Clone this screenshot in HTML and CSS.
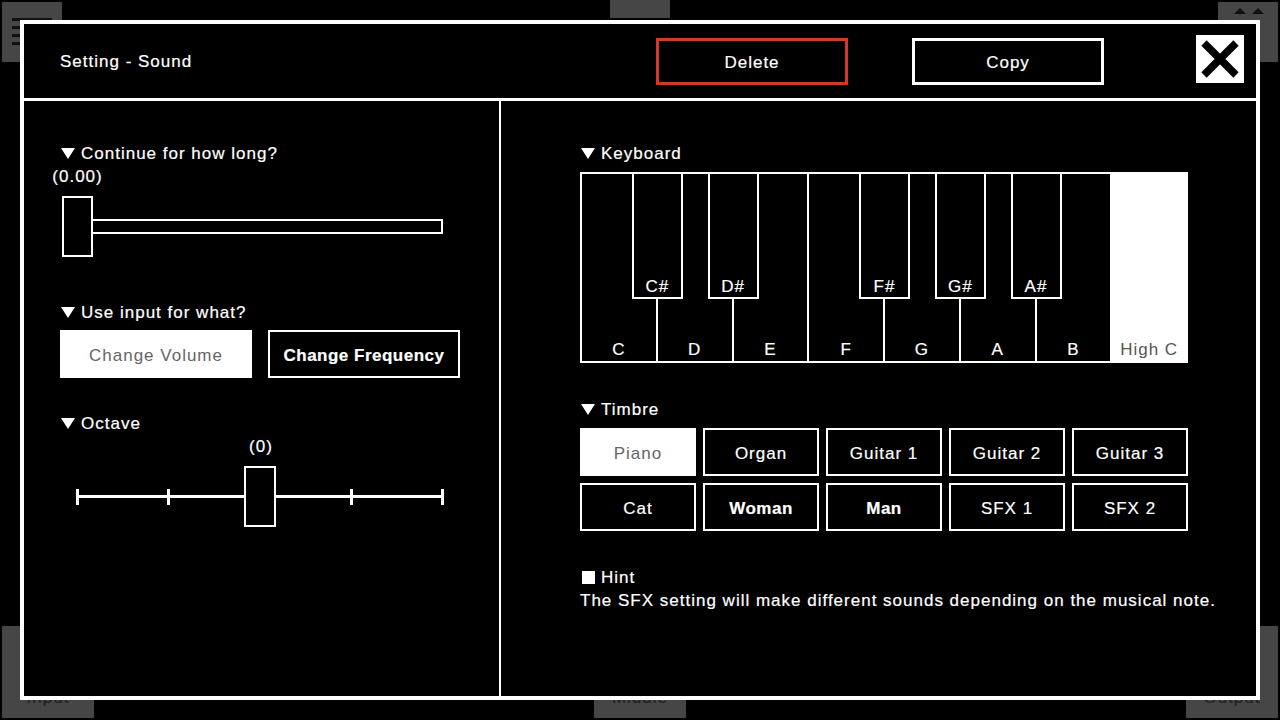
FILE: index.html
```html
<!DOCTYPE html>
<html lang="en">
<head>
    <meta charset="UTF-8">
    <title>Setting - Sound</title>
    <link rel="stylesheet" href="styles.css">
</head>
<body>

    <!-- Editor behind the dialog -->
    <div class="stage">
        <div class="stage-row">
            <div class="tile menu-tile">
                <span></span><span></span><span></span><span></span>
            </div>
            <div class="tile tab-tile"></div>
            <div class="tile arrow-tile">
                <svg width="60" height="60" viewBox="0 0 60 60">
                    <path d="M16 12 L22 6 L28 12 Z M34 12 L40 6 L46 12 Z M16 30 L22 36 L28 30 Z" fill="#111"/>
                </svg>
            </div>
        </div>
        <div class="stage-row bottom">
            <div class="tile node-tile">Input</div>
            <div class="tile node-tile">Middle</div>
            <div class="tile node-tile">Output</div>
        </div>
    </div>

    <!-- Sound settings dialog -->
    <div class="dialog">
        <div class="dialog-head">
            <div class="title">Setting - Sound</div>
            <button class="head-btn delete">Delete</button>
            <button class="head-btn copy">Copy</button>
            <button class="close-btn">
                <svg width="48" height="48" viewBox="0 0 48 48">
                    <path d="M8 8 L40 40 M40 8 L8 40" stroke="#000" stroke-width="7.5"/>
                </svg>
            </button>
        </div>

        <div class="dialog-body">
            <div class="panel left">
                <div class="label"><i class="tri"></i>Continue for how long?</div>
                <div class="length-value"><span>(0.00)</span></div>
                <div class="length-slider">
                    <div class="thumb"></div>
                    <div class="track"></div>
                </div>

                <div class="label gap"><i class="tri"></i>Use input for what?</div>
                <div class="choice-row">
                    <button class="choice selected">Change Volume</button>
                    <button class="choice bold">Change Frequency</button>
                </div>

                <div class="label gap2"><i class="tri"></i>Octave</div>
                <div class="octave">
                    <div class="octave-value">(0)</div>
                    <div class="octave-track">
                        <span class="tick"></span>
                        <span class="tick"></span>
                        <span class="tick"></span>
                        <span class="tick"></span>
                        <span class="tick"></span>
                        <div class="octave-thumb"></div>
                    </div>
                </div>
            </div>

            <div class="panel right">
                <div class="label"><i class="tri"></i>Keyboard</div>
                <div class="keyboard">
                    <div class="white-key">C<div class="black-key">C#</div></div>
                    <div class="white-key">D<div class="black-key">D#</div></div>
                    <div class="white-key">E</div>
                    <div class="white-key">F<div class="black-key">F#</div></div>
                    <div class="white-key">G<div class="black-key">G#</div></div>
                    <div class="white-key">A<div class="black-key">A#</div></div>
                    <div class="white-key">B</div>
                    <div class="white-key high">High C</div>
                </div>

                <div class="label gap3"><i class="tri"></i>Timbre</div>
                <div class="timbre-grid">
                    <button class="timbre selected">Piano</button>
                    <button class="timbre">Organ</button>
                    <button class="timbre">Guitar 1</button>
                    <button class="timbre">Guitar 2</button>
                    <button class="timbre">Guitar 3</button>
                    <button class="timbre">Cat</button>
                    <button class="timbre bold">Woman</button>
                    <button class="timbre bold">Man</button>
                    <button class="timbre">SFX 1</button>
                    <button class="timbre">SFX 2</button>
                </div>

                <div class="label gap3"><i class="square"></i>Hint</div>
                <div class="hint">The SFX setting will make different sounds depending on the musical note.</div>
            </div>
        </div>
    </div>

</body>
</html>
```

FILE: styles.css
```css
/* Reset */
* {
    margin: 0;
    padding: 0;
    box-sizing: border-box;
}

body {
    width: 1280px;
    height: 720px;
    overflow: hidden;
    background: #000;
    color: #fff;
    font-family: "Liberation Sans", Arial, sans-serif;
    font-size: 17px;
    letter-spacing: 1px;
    -webkit-text-stroke: 0.2px;
    position: relative;
}

button {
    font-family: inherit;
    font-size: 17px;
    letter-spacing: 1px;
    color: #fff;
    background: #000;
    cursor: pointer;
    padding-top: 3px;
}

/* Background editor */
.stage {
    height: 720px;
    display: flex;
    flex-direction: column;
    justify-content: space-between;
}

.stage-row {
    display: flex;
    justify-content: space-between;
    align-items: flex-start;
    padding: 2px 2px 0;
}

.stage-row.bottom {
    align-items: flex-end;
    padding: 0 2px 2px;
}

.tile {
    background: #464646;
}

.menu-tile {
    width: 60px;
    height: 60px;
    padding: 16px 10px;
    display: flex;
    flex-direction: column;
    gap: 5px;
}

.menu-tile span {
    height: 3px;
    background: #111;
}

.tab-tile {
    width: 60px;
    height: 18px;
    margin-top: -2px;
}

.arrow-tile {
    width: 60px;
    height: 60px;
}

.node-tile {
    width: 92px;
    height: 92px;
    color: #222;
    text-align: center;
    padding-top: 62px;
}

/* Dialog */
.dialog {
    position: absolute;
    left: 20px;
    top: 20px;
    width: 1240px;
    height: 680px;
    border: 4px solid #fff;
    background: #000;
    display: flex;
    flex-direction: column;
}

.dialog-head {
    height: 77px;
    border-bottom: 3px solid #fff;
    display: flex;
    align-items: center;
    padding: 0 12px 0 36px;
}

.title {
    flex: 1;
    padding-top: 2px;
}

.head-btn {
    width: 192px;
    height: 47px;
    border: 3px solid #fff;
}

.head-btn.delete {
    border-color: #d2392d;
    margin-right: 64px;
}

.head-btn.copy {
    margin-right: 92px;
}

.close-btn {
    width: 48px;
    height: 48px;
    border: none;
    padding: 0;
    background: #fff;
    display: flex;
    margin-top: -4px;
}

.dialog-body {
    flex: 1;
    display: flex;
}

.panel {
    padding-top: 42px;
}

.panel.left {
    width: 477px;
    border-right: 2px solid #fff;
    padding-left: 36px;
}

.panel.right {
    flex: 1;
    padding-left: 79px;
}

.label {
    line-height: 20px;
    height: 20px;
    padding-top: 2px;
    display: flex;
    align-items: center;
    gap: 6px;
}

.tri {
    width: 0;
    height: 0;
    margin: -2px 0 0 1px;
    border-left: 7.5px solid transparent;
    border-right: 7.5px solid transparent;
    border-top: 11px solid #fff;
}

.square {
    width: 13px;
    height: 13px;
    margin: -2px 0 0 2px;
    background: #fff;
}

.label.gap {
    margin-top: 45px;
}

.label.gap2 {
    margin-top: 35px;
}

.label.gap3 {
    margin-top: 36px;
}

/* Length slider */
.length-value {
    width: 31px;
    margin: 4px 0 0 2px;
    line-height: 20px;
    display: flex;
    justify-content: center;
    white-space: nowrap;
}

.length-slider {
    display: flex;
    align-items: center;
    margin: 9px 0 0 2px;
}

.thumb {
    width: 31px;
    height: 61px;
    border: 2px solid #fff;
}

.track {
    width: 350px;
    height: 15px;
    border: 2px solid #fff;
    border-left: none;
}

/* Input choice */
.choice-row {
    display: flex;
    gap: 16px;
    margin-top: 8px;
}

.choice {
    width: 192px;
    height: 48px;
    border: 2px solid #fff;
}

.choice.selected,
.timbre.selected {
    background: #fff;
    color: #666;
    -webkit-text-stroke: 0;
}

.bold {
    font-weight: bold;
    letter-spacing: 0.5px;
}

/* Octave slider */
.octave {
    width: 368px;
    margin: 4px 0 0 16px;
}

.octave-value {
    text-align: center;
    line-height: 20px;
    padding-left: 2px;
}

.octave-track {
    position: relative;
    height: 61px;
    margin-top: 9px;
    display: flex;
    align-items: center;
    justify-content: space-between;
    background: linear-gradient(#fff, #fff) center / 100% 3px no-repeat;
}

.tick {
    width: 3px;
    height: 16px;
    background: #fff;
}

.octave-thumb {
    position: absolute;
    left: 168px;
    top: 0;
    width: 32px;
    height: 61px;
    background: #000;
    border: 2px solid #fff;
}

/* Keyboard */
.keyboard {
    margin-top: 9px;
    width: 608px;
    height: 191px;
    border: 2px solid #fff;
    display: flex;
}

.white-key {
    position: relative;
    flex: 1;
    border-left: 2px solid #fff;
    display: flex;
    align-items: flex-end;
    justify-content: center;
    padding-bottom: 1px;
    line-height: 20px;
}

.white-key:first-child {
    border-left: none;
}

.white-key.high {
    background: #fff;
    color: #555;
    -webkit-text-stroke: 0;
}

.black-key {
    position: absolute;
    top: -2px;
    right: -27px;
    width: 51px;
    height: 127px;
    background: #000;
    color: #fff;
    border: 2px solid #fff;
    z-index: 1;
    display: flex;
    align-items: flex-end;
    justify-content: center;
    line-height: 20px;
    padding-bottom: 0;
}

/* Timbre */
.timbre-grid {
    margin-top: 9px;
    width: 608px;
    display: grid;
    grid-template-columns: repeat(5, 116px);
    grid-auto-rows: 48px;
    gap: 7px;
}

.timbre {
    border: 2px solid #fff;
}

/* Hint */
.label.gap3 + .hint {
    margin-top: 4px;
}

.hint {
    line-height: 20px;
    white-space: nowrap;
}
```
